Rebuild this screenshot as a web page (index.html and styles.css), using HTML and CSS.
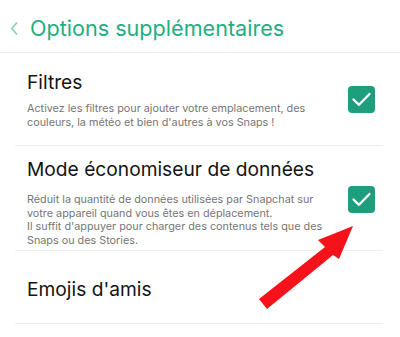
FILE: index.html
```html
<!DOCTYPE html>
<html lang="fr">
<head>
<meta charset="utf-8">
<link rel="stylesheet" href="styles.css">
</head>
<body>
<div class="screen">
  <header class="header">
    <svg class="back" viewBox="0 0 8 13" width="8" height="13"><path d="M6.5 1 L1.8 6.5 L6.5 12" fill="none" stroke="#8dd3bb" stroke-width="1.8" stroke-linecap="round" stroke-linejoin="round"/></svg>
    <h1 class="title">Options supplémentaires</h1>
  </header>
  <ul class="list">
    <li class="row row-first">
      <div class="text">
        <div class="name">Filtres</div>
        <p class="desc desc-first">Activez les filtres pour ajouter votre emplacement, des couleurs, la météo et bien d'autres à vos Snaps !</p>
      </div>
      <span class="check"><svg viewBox="0 0 27 27" width="27" height="27"><path d="M5.5 13.5 L11 18.8 L21.5 8" fill="none" stroke="#fff" stroke-width="2.3" stroke-linecap="round" stroke-linejoin="round"/></svg></span>
    </li>
    <li class="row row-second">
      <div class="text">
        <div class="name">Mode économiseur de données</div>
        <p class="desc desc-second">Réduit la quantité de données utilisées par Snapchat sur votre appareil quand vous êtes en déplacement.<br>Il suffit d'appuyer pour charger des contenus tels que des Snaps ou des Stories.</p>
      </div>
      <span class="check check-low"><svg viewBox="0 0 27 27" width="27" height="27"><path d="M5.5 13.5 L11 18.8 L21.5 8" fill="none" stroke="#fff" stroke-width="2.3" stroke-linecap="round" stroke-linejoin="round"/></svg></span>
    </li>
    <li class="row row-third">
      <div class="text">
        <div class="name">Emojis d'amis</div>
      </div>
    </li>
  </ul>
  <svg class="arrow" viewBox="0 0 400 337" width="400" height="337">
    <polygon points="353,226 318,240 325,247 259,299 267,309 333,255 339,259" fill="#f5121a"/>
  </svg>
</div>
</body>
</html>
```
FILE: styles.css
```css
* { box-sizing: border-box; }
html, body { margin: 0; padding: 0; background: #fff; }
body { font-family: Inter, "Open Sans", sans-serif; width: 400px; height: 337px; overflow: hidden; }
.screen { position: relative; width: 400px; height: 337px; }
.header {
  height: 53px;
  display: flex;
  align-items: flex-start;
  border-bottom: 1px solid #eeeeee;
  padding: 15px 0 0 10px;
}
.back { display: block; margin: 7px 12px 0 0; }
.title { margin: 0; font-weight: 400; font-size: 21.6px; line-height: 26px; color: #1fae83; }
.list { list-style: none; margin: 0 17px 0 15px; padding: 0; }
.row {
  display: flex;
  align-items: center;
  border-bottom: 1px solid #efefef;
  padding-left: 12px;
}
.row-first { padding-top: 17px; padding-bottom: 16px; }
.row-second { padding-top: 11px; padding-bottom: 3px; }
.row-third { padding-top: 26px; padding-bottom: 22px; }
.text { flex: 1; }
.name { font-size: 19.2px; color: #141414; line-height: 24px; }
.desc { margin: 0; font-size: 10.8px; line-height: 13.5px; color: #767676; width: 305px; }
.desc-first { margin-top: 8px; }
.desc-second { margin-top: 12px; }
.check {
  width: 27px; height: 27px; border-radius: 4px; background: #1f9e7e;
  display: flex; align-items: center; justify-content: center;
  margin-right: 8px;
}
.check-low { margin-top: -6px; }
.check svg { display: block; }
.arrow { position: absolute; left: 0; top: 0; pointer-events: none; }
```
